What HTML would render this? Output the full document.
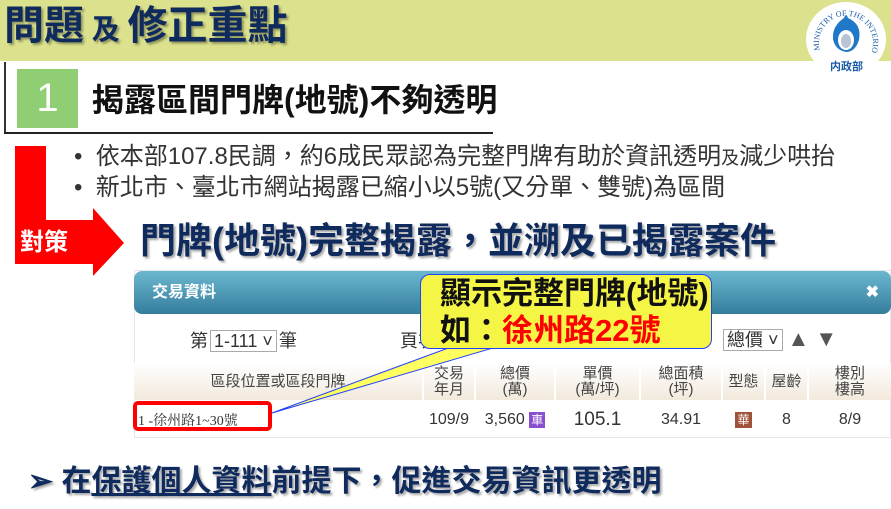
<!DOCTYPE html>
<html><head><meta charset="utf-8"><style>
*{margin:0;padding:0;box-sizing:border-box}
body{width:891px;height:509px;overflow:hidden;background:#fff;position:relative;font-family:"Liberation Sans","Noto Sans CJK TC",sans-serif}
.a{position:absolute;white-space:nowrap}
.navy{color:#0f2a5c;font-weight:bold;text-shadow:2px 2px 2px rgba(0,0,0,.35)}
table{border-collapse:separate;border-spacing:2px;font-size:14px;color:#444;table-layout:fixed}
td{text-align:center;overflow:hidden}
</style></head><body>
<div class="a" style="left:0;top:0;width:891px;height:61px;background:#dbe18c"></div>
<div class="a navy" style="left:4px;top:2px;font-size:40px;line-height:48px">問題<span style="font-size:28px"> 及 </span>修正重點</div>
<div class="a" style="left:806px;top:2px;width:80px;height:74px;border-radius:50%;background:#fff"></div>
<svg class="a" style="left:806px;top:2px" width="80" height="74" viewBox="0 0 80 74">
<path id="c" d="M14 48 A27 27 0 1 1 66 48" fill="none"/>
<text font-size="8" fill="#1a5aa8" font-family="Liberation Serif"><textPath href="#c">MINISTRY OF THE INTERIOR</textPath></text>
<path d="M38 16 Q40 10 42 16 Q56 22 53 38 Q49 50 40 50 Q29 48 27 37 Q26 24 38 16Z" fill="#1f78c8"/>
<ellipse cx="40" cy="38" rx="8" ry="10" fill="#fff"/><ellipse cx="40" cy="39" rx="5" ry="7" fill="#b8c4d6"/>
<text x="24" y="68" font-size="11" fill="#1a5aa8" font-weight="bold">内政部</text></svg>
<div class="a" style="left:4px;top:62px;width:2px;height:72px;background:#333"></div>
<div class="a" style="left:4px;top:132px;width:489px;height:2px;background:#222"></div>
<div class="a" style="left:17px;top:69px;width:61px;height:59px;background:#8fce72;color:#fff;font-size:40px;text-align:center;line-height:59px">1</div>
<div class="a" style="left:92px;top:80px;font-size:32px;font-weight:bold;color:#111;line-height:40px">揭露區間門牌(地號)不夠透明</div>
<div class="a" style="left:74px;top:142px;font-size:24px;color:#333;line-height:29px">•&nbsp;&nbsp;依本部107.8民調，約6成民眾認為完整門牌有助於資訊透明<span style="font-size:18px">及</span>減少哄抬<br>•&nbsp;&nbsp;新北市、臺北市網站揭露已縮小以5號(又分單、雙號)為區間</div>
<svg class="a" style="left:12px;top:146px" width="115" height="130"><path d="M3 0H34V74H81V62L112 97L81 130V118H3Z" fill="#f00"/></svg>
<div class="a" style="left:20px;top:228px;color:#fff;font-size:24px;font-weight:bold;line-height:30px">對策</div>
<div class="a navy" style="left:140px;top:218px;font-size:36px;line-height:46px">門牌(地號)完整揭露，並溯及已揭露案件</div>
<div class="a" style="left:134px;top:270px;width:757px;height:168px;background:#fff;border:1px solid #e6e6e6"></div>
<div class="a" style="left:134px;top:271px;width:757px;height:43px;border-radius:8px;background:linear-gradient(#6cb7cf,#347e9d);color:#fff;font-weight:bold;font-size:16px;line-height:43px;padding-left:18px">交易資料<span style="position:absolute;right:12px;font-size:16px">✖</span></div>
<div class="a" style="left:190px;top:327px;font-size:18px;color:#333">第<span style="border:1px solid #aaa;padding:0 3px;margin:0 2px">1-111 ˅</span>筆</div>
<div class="a" style="left:400px;top:327px;font-size:18px;color:#333">頁次</div>
<div class="a" style="left:723px;top:326px;font-size:18px;color:#333"><span style="border:1px solid #aaa;padding:0 3px">總價 ˅</span> <span style="color:#555;font-size:22px">▲ ▼</span></div>
<table class="a" style="left:132px;top:361px;width:759px">
<colgroup><col style="width:288px"><col style="width:50px"><col style="width:78px"><col style="width:83px"><col style="width:80px"><col style="width:41px"><col style="width:41px"><col style="width:82px"></colgroup>
<tr style="background:linear-gradient(#fff,#f2e9dc);height:37px;line-height:16px;font-size:15px">
<td>區段位置或區段門牌</td><td>交易<br>年月</td><td>總價<br>(萬)</td><td>單價<br>(萬/坪)</td><td>總面積<br>(坪)</td><td>型態</td><td>屋齡</td><td>樓別<br>樓高</td></tr>
<tr style="height:35px;font-size:16px;color:#333"><td style="text-align:left;padding-left:4px;font-family:'Liberation Serif','Noto Serif CJK SC',serif;font-size:14px">1 -徐州路1~30號</td><td>109/9</td><td>3,560 <span style="background:#8a4fd0;color:#fff;font-size:12px;padding:1px 2px">車</span></td><td style="font-size:19px">105.1</td><td>34.91</td><td><span style="background:#a0523a;color:#fff;font-size:12px;padding:1px 2px">華</span></td><td>8</td><td>8/9</td></tr>
</table>
<div class="a" style="left:133px;top:401px;width:139px;height:30px;border:4px solid #f00;border-radius:5px"></div>
<svg class="a" style="left:0;top:0" width="891" height="509"><path d="M272 413L470 340L520 340Z" fill="#ffff60" stroke="#2040ff" stroke-width="1"/></svg>
<div class="a" style="left:420px;top:274px;width:292px;height:75px;background:#f5f546;border:1px solid #2040ff;border-radius:10px"></div>
<div class="a" style="left:440px;top:275px;font-size:31px;font-weight:bold;color:#111;line-height:37px">顯示完整門牌(地號)<br>如：<span style="color:#f00">徐州路22號</span></div>
<div class="a navy" style="left:28px;top:462px;font-size:30px;line-height:40px">➢ 在<u>保護個人資料</u>前提下，促進交易資訊更透明</div>
</body></html>
